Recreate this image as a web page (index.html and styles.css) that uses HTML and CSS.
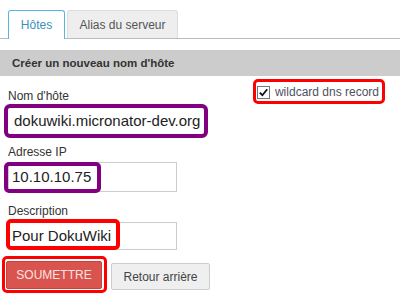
FILE: index.html
```html
<!DOCTYPE html>
<html>
<head>
<meta charset="utf-8">
<link rel="stylesheet" href="styles.css">
</head>
<body>
<div class="page">
  <div class="tabs">
    <div class="tab active">Hôtes</div>
    <div class="tab">Alias du serveur</div>
  </div>
  <div class="section-title">Créer un nouveau nom d'hôte</div>
  <div class="form">
    <div class="row-top">
      <div class="field">
        <label class="label l-host">Nom d'hôte</label>
        <div class="input wide">dokuwiki.micronator-dev.org</div>
      </div>
      <div class="check">
        <span class="box">
          <svg width="11" height="11" viewBox="0 0 11 11"><path d="M1.8 5.6 L4.4 8.2 L9.2 2.2" fill="none" stroke="#111" stroke-width="1.8"/></svg>
        </span>
        <span class="check-text">wildcard dns record</span>
        <span class="hl hl-red hl-check"></span>
      </div>
    </div>
    <div class="field">
      <label class="label l-ip">Adresse IP</label>
      <div class="input mid">10.10.10.75<span class="hl hl-purple hl-ip"></span></div>
    </div>
    <div class="field">
      <label class="label l-desc">Description</label>
      <div class="input mid short">Pour DokuWiki<span class="hl hl-red hl-desc"></span></div>
    </div>
    <div class="buttons">
      <button class="btn btn-primary">SOUMETTRE<span class="hl hl-red hl-btn"></span></button>
      <button class="btn btn-default">Retour arrière</button>
    </div>
  </div>
</div>
</body>
</html>
```
FILE: styles.css
```css
* { box-sizing: border-box; }
html, body { margin: 0; padding: 0; background: #fff; }
body { font-family: "Liberation Sans", Arial, sans-serif; color: #333; width: 400px; height: 301px; overflow: hidden; }
.page { padding-top: 10px; }
.tabs { display: flex; gap: 2px; padding-left: 8px; border-bottom: 1px solid #bbb; height: 29px; }
.tab { height: 28px; width: 111px; justify-content: center; display: flex; align-items: center; font-size: 12px; color: #555; background: #eee; border: 1px solid #ddd; border-bottom: none; border-radius: 3px 3px 0 0; }
.tab.active { width: 57px; background: #fff; color: #3a8fc0; border: 1px solid #5ab4e0; border-bottom: none; height: 29px; margin-bottom: -1px; }
.section-title { margin-top: 11px; height: 26px; background: #ccc; font-size: 11.5px; font-weight: bold; color: #333; padding-left: 12px; display: flex; align-items: center; }
.form { padding: 0 8px; }
.row-top { display: flex; justify-content: space-between; }
.field { display: flex; flex-direction: column; }
.label { font-size: 12px; color: #333; height: 14px; line-height: 14px; }
.l-host { margin-top: 13px; margin-bottom: 1px; }
.l-ip { margin-top: 7px; margin-bottom: 3px; }
.l-desc { margin-top: 12px; margin-bottom: 4px; }
.input { position: relative; font-size: 15px; white-space: nowrap; color: #222; height: 30px; line-height: 28px; padding-left: 3px; border: 1px solid #ccc; background: #fff; }
.short { height: 28px; line-height: 26px; }
.wide { margin-left: -4px; padding-left: 6px; border: 4px solid #800080; border-radius: 6px; height: 34px; line-height: 26px; width: 204px; }
.mid { width: 169px; }
.check { position: relative; display: flex; align-items: center; margin-top: 9px; margin-right: 13px; height: 14px; font-size: 12px; color: #555; }
.box { width: 13px; height: 13px; border: 1px solid #777; background: #fff; display: flex; align-items: center; justify-content: center; margin-right: 5px; }
.check-text { color: #505060; }
.hl { position: absolute; pointer-events: none; border-radius: 5px; }
.hl-red { border: 4px solid #f00; }
.hl-purple { border: 4px solid #800080; }
.hl-check { left: -4px; top: -6px; right: -6px; bottom: -5px; border-width: 3px; }
.hl-ip { left: -5px; top: -1px; width: 97px; bottom: -2px; }
.hl-desc { left: -3px; top: -4px; width: 114px; bottom: -1px; }
.buttons { display: flex; align-items: center; gap: 9px; margin-top: 10px; }
.btn { position: relative; font-family: "Liberation Sans", Arial, sans-serif; font-size: 12px; border-radius: 2px; cursor: pointer; }
.btn-primary { margin-left: -2px; width: 96px; height: 28px; background: #d9534f; color: #fbe3e2; border: 1px solid #c9423e; }
.btn-default { width: 99px; height: 27px; margin-top: 3px; background: #efefef; color: #444; border: 1px solid #ccc; }
.hl-btn { left: -5px; top: -6px; right: -6px; bottom: -5px; border-width: 3.5px; }
```
